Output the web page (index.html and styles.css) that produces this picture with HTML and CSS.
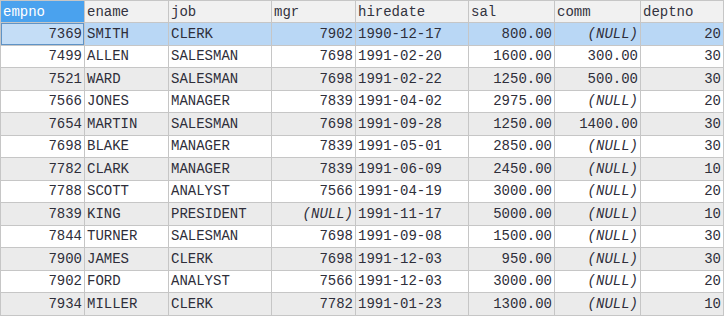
FILE: index.html
```html
<!DOCTYPE html>
<html lang="en">
<head>
    <meta charset="UTF-8">
    <title>emp</title>
    <link rel="stylesheet" href="styles.css">
</head>
<body>
    <table class="grid">
        <colgroup>
            <col style="width: 84px">
            <col style="width: 84px">
            <col style="width: 103px">
            <col style="width: 84px">
            <col style="width: 113px">
            <col style="width: 86px">
            <col style="width: 86px">
            <col style="width: 83px">
        </colgroup>
        <thead>
            <tr>
                <th class="active">empno</th>
                <th>ename</th>
                <th>job</th>
                <th>mgr</th>
                <th>hiredate</th>
                <th>sal</th>
                <th>comm</th>
                <th>deptno</th>
            </tr>
        </thead>
        <tbody id="rows"></tbody>
    </table>

    <script>
        const emp = [
            [7369, 'SMITH', 'CLERK', 7902, '1990-12-17', '800.00', null, 20],
            [7499, 'ALLEN', 'SALESMAN', 7698, '1991-02-20', '1600.00', '300.00', 30],
            [7521, 'WARD', 'SALESMAN', 7698, '1991-02-22', '1250.00', '500.00', 30],
            [7566, 'JONES', 'MANAGER', 7839, '1991-04-02', '2975.00', null, 20],
            [7654, 'MARTIN', 'SALESMAN', 7698, '1991-09-28', '1250.00', '1400.00', 30],
            [7698, 'BLAKE', 'MANAGER', 7839, '1991-05-01', '2850.00', null, 30],
            [7782, 'CLARK', 'MANAGER', 7839, '1991-06-09', '2450.00', null, 10],
            [7788, 'SCOTT', 'ANALYST', 7566, '1991-04-19', '3000.00', null, 20],
            [7839, 'KING', 'PRESIDENT', null, '1991-11-17', '5000.00', null, 10],
            [7844, 'TURNER', 'SALESMAN', 7698, '1991-09-08', '1500.00', null, 30],
            [7900, 'JAMES', 'CLERK', 7698, '1991-12-03', '950.00', null, 30],
            [7902, 'FORD', 'ANALYST', 7566, '1991-12-03', '3000.00', null, 20],
            [7934, 'MILLER', 'CLERK', 7782, '1991-01-23', '1300.00', null, 10]
        ];
        // which columns are numbers (right aligned)
        const numeric = [true, false, false, true, false, true, true, true];

        const tbody = document.getElementById('rows');
        emp.forEach((row, i) => {
            const tr = document.createElement('tr');
            if (i === 0) tr.className = 'selected';
            row.forEach((value, c) => {
                const td = document.createElement('td');
                if (numeric[c]) td.classList.add('num');
                if (value === null) {
                    td.classList.add('null');
                    td.textContent = '(NULL)';
                } else {
                    td.textContent = value;
                }
                if (i === 0 && c === 0) td.classList.add('current');
                tr.appendChild(td);
            });
            tbody.appendChild(tr);
        });
    </script>
</body>
</html>
```

FILE: styles.css
```css
* {
    margin: 0;
    padding: 0;
    box-sizing: border-box;
}

body {
    background-color: #ffffff;
    font-family: "Liberation Mono", "Courier New", monospace;
    font-size: 14px;
    color: #2e2e3a;
}

.grid {
    border-collapse: collapse;
    table-layout: fixed;
    width: 724px;
}

.grid th,
.grid td {
    border: 1px solid #c6c6c6;
    padding: 0 2px 0 2px;
    height: 22.5px;
    white-space: nowrap;
    overflow: hidden;
    text-align: left;
    font-weight: normal;
}

.grid th {
    height: 22px;
    background-color: #f1f1f1;
    color: #333340;
}

.grid th.active {
    background-color: #4aa2ee;
    color: #ffffff;
}

.grid tbody tr:nth-child(odd) td {
    background-color: #ebebeb;
}

.grid tbody tr:nth-child(even) td {
    background-color: #ffffff;
}

.grid tbody tr.selected td {
    background-color: #b9d7f5;
}

.grid td.num {
    text-align: right;
}

.grid td.null {
    font-style: italic;
}

.grid tbody tr.selected td.current {
    background-color: #c4ddf6;
    box-shadow: inset 0 0 0 1px #5f93c6;
}
```
